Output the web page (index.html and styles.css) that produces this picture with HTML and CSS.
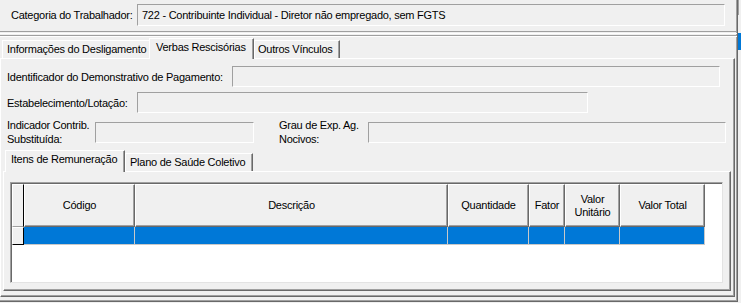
FILE: index.html
```html
<!DOCTYPE html>
<html lang="pt-BR">
<head>
<meta charset="utf-8">
<title>Verbas Rescisórias</title>
<link rel="stylesheet" href="styles.css">
</head>
<body>
<div class="window">
  <div class="main">
    <div class="top">
      <span class="lbl l-cat">Categoria do Trabalhador:</span>
      <div class="field f-cat">722 - Contribuinte Individual - Diretor não empregado, sem FGTS</div>
    </div>
    <div class="sep"></div>
    <div class="tabctl">
      <div class="tabs">
        <div class="tab t-info">Informações do Desligamento</div>
        <div class="tab active t-verbas">Verbas Rescisórias</div>
        <div class="tab t-outros">Outros Vínculos</div>
      </div>
      <div class="page">
        <div class="row r1">
          <span class="lbl l-ident">Identificador do Demonstrativo de Pagamento:</span>
          <div class="field f-ident"></div>
        </div>
        <div class="row r2">
          <span class="lbl l-estab">Estabelecimento/Lotação:</span>
          <div class="field f-estab"></div>
        </div>
        <div class="row r3">
          <span class="lbl l-ind">Indicador Contrib.<br>Substituída:</span>
          <div class="field f-ind"></div>
          <span class="lbl l-grau">Grau de Exp. Ag.<br>Nocivos:</span>
          <div class="field f-grau"></div>
        </div>
        <div class="subtabs">
          <div class="stab active s-itens">Itens de Remuneração</div>
          <div class="stab s-plano">Plano de Saúde Coletivo</div>
        </div>
        <div class="subpage">
          <div class="grid">
            <table>
              <colgroup>
                <col class="c-ind"><col class="c-cod"><col class="c-desc"><col class="c-qtd"><col class="c-fat"><col class="c-vu"><col class="c-vt">
              </colgroup>
              <thead>
                <tr>
                  <th class="ind"></th>
                  <th>Código</th>
                  <th>Descrição</th>
                  <th>Quantidade</th>
                  <th>Fator</th>
                  <th>Valor<br>Unitário</th>
                  <th>Valor Total</th>
                </tr>
              </thead>
              <tbody>
                <tr class="sel">
                  <td class="ind"></td>
                  <td></td><td></td><td></td><td></td><td></td><td></td>
                </tr>
              </tbody>
            </table>
          </div>
        </div>
      </div>
    </div>
  </div>
  <div class="side"><div class="side-line"></div><div class="side-blue"></div></div>
</div>
</body>
</html>
```

FILE: styles.css
```css
* { box-sizing: border-box; }
html, body { margin: 0; padding: 0; }
body {
  width: 741px;
  height: 303px;
  overflow: hidden;
  background: #f0f0f0;
  font-family: "Liberation Sans", Arial, sans-serif;
  font-size: 11px;
  letter-spacing: -0.25px;
  color: #000;
}
.window { display: flex; height: 303px; }
.main {
  width: 738px;
  height: 302px;
  border-right: 1px solid #696969;
  border-bottom: 1px solid #696969;
  box-shadow: inset -1px -1px 0 #a0a0a0;
  display: flex;
  flex-direction: column;
}
.side { width: 3px; display: flex; flex-direction: column; }
.side-line { width: 1px; height: 15px; background: #a0a0a0; }
.side-blue { margin-top: 18px; width: 3px; height: 17px; background: #0078d7; }

.lbl { white-space: nowrap; line-height: 14px; flex: none; }
.field {
  flex: none;
  background: #f0f0f0;
  border-top: 1px solid #a0a0a0;
  border-left: 1px solid #a0a0a0;
  border-right: 1px solid #fff;
  border-bottom: 1px solid #fff;
  height: 21px;
  line-height: 19px;
  padding-left: 4px;
  white-space: nowrap;
}

/* top panel */
.top {
  height: 32px;
  width: 737px;
  border-bottom: 1px solid #a0a0a0;
  border-right: 1px solid #a0a0a0;
  display: flex;
  align-items: flex-start;
  padding: 4px 0 0 11px;
}
.l-cat { width: 126px; line-height: 22px; }
.f-cat { width: 588px; height: 22px; line-height: 20px; }
.sep {
  margin-top: 1px;
  height: 4px;
  border-top: 1px solid #fff;
  border-bottom: 1px solid #fff;
  box-shadow: inset 0 -1px 0 #a0a0a0;
}

/* main tab control */
.tabctl { flex: 1; display: flex; flex-direction: column; }
.tabs {
  height: 21px;
  display: flex;
  align-items: flex-end;
  padding-left: 2px;
  position: relative;
  z-index: 1;
}
.tab {
  height: 18px;
  border-top: 1px solid #fff;
  border-left: 1px solid #fff;
  border-right: 1px solid #696969;
  box-shadow: inset -1px 0 0 #a0a0a0;
  padding: 0 4px;
  line-height: 17px;
  white-space: nowrap;
  background: #f0f0f0;
}
.t-info { width: 148px; margin-right: -1px; border-right: none; box-shadow: none; }
.tab.active {
  height: 21px;
  margin-bottom: -1px;
  line-height: 16px;
  padding-left: 6px;
  width: 105px;
}
.t-outros { width: 86px; padding-left: 3px; }

.page {
  flex: 1;
  width: 735px;
  border-top: 1px solid #fff;
  border-left: 1px solid #fff;
  border-right: 1px solid #696969;
  border-bottom: 1px solid #696969;
  box-shadow: inset -1px -1px 0 #a0a0a0;
  margin-bottom: 4px;
  padding: 7px 0 0 6px;
  display: flex;
  flex-direction: column;
}
.row { display: flex; align-items: center; }
.r2 { margin-top: 5px; }
.r3 { margin-top: 5px; }
.l-ident { width: 225px; }
.f-ident { width: 488px; }
.l-estab { width: 130px; }
.f-estab { width: 451px; }
.l-ind { width: 88px; }
.f-ind { width: 159px; }
.l-grau { width: 89px; margin-left: 25px; }
.f-grau { width: 358px; }

/* sub tabs */
.subtabs {
  margin-top: 4px;
  margin-left: -2px;
  height: 21px;
  display: flex;
  align-items: flex-end;
  position: relative;
  z-index: 1;
}
.stab {
  height: 18px;
  border-top: 1px solid #fff;
  border-left: 1px solid #fff;
  border-right: 1px solid #696969;
  box-shadow: inset -1px 0 0 #a0a0a0;
  line-height: 17px;
  white-space: nowrap;
  background: #f0f0f0;
}
.stab.active {
  height: 22px;
  margin-bottom: -1px;
  width: 120px;
  padding-left: 5px;
  line-height: 17px;
}
.s-plano { width: 128px; padding-left: 4px; }

.subpage {
  margin-left: -4px;
  width: 728px;
  height: 120px;
  border-top: 1px solid #fff;
  border-left: 1px solid #fff;
  border-right: 1px solid #696969;
  border-bottom: 1px solid #696969;
  box-shadow: inset -1px -1px 0 #a0a0a0;
  padding: 10px 0 0 6px;
}

/* grid */
.grid {
  width: 713px;
  height: 101px;
  background: #fff;
  border-top: 1px solid #a0a0a0;
  border-left: 1px solid #a0a0a0;
  border-right: 1px solid #e3e3e3;
  border-bottom: 1px solid #e3e3e3;
  box-shadow: inset 1px 1px 0 #696969;
  padding: 1px 0 0 1px;
}
table {
  border-collapse: separate;
  border-spacing: 0;
  table-layout: fixed;
  width: 693px;
}
.c-ind { width: 12px; }
.c-cod { width: 111px; }
.c-desc { width: 313px; }
.c-qtd { width: 81px; }
.c-fat { width: 36px; }
.c-vu { width: 55px; }
.c-vt { width: 85px; }
th {
  height: 43px;
  padding: 0;
  font-weight: normal;
  text-align: center;
  line-height: 13px;
  background: #f0f0f0;
  border-top: 1px solid #fff;
  border-left: 1px solid #fff;
  border-right: 1px solid #696969;
  border-bottom: 1px solid #696969;
  box-shadow: inset -1px -1px 0 #a0a0a0;
}
th.ind { border-right: 1px solid #000; box-shadow: none; border-bottom: 1px solid #a0a0a0; }
td {
  height: 18px;
  padding: 0;
  background: #0078d7;
  border-right: 1px solid #c8c8c8;
  border-bottom: 1px solid #c8c8c8;
}
td.ind {
  background: #f0f0f0;
  border-top: 1px solid #fff;
  border-left: 1px solid #fff;
  border-right: 1px solid #000;
  border-bottom: 1px solid #000;
}
```
